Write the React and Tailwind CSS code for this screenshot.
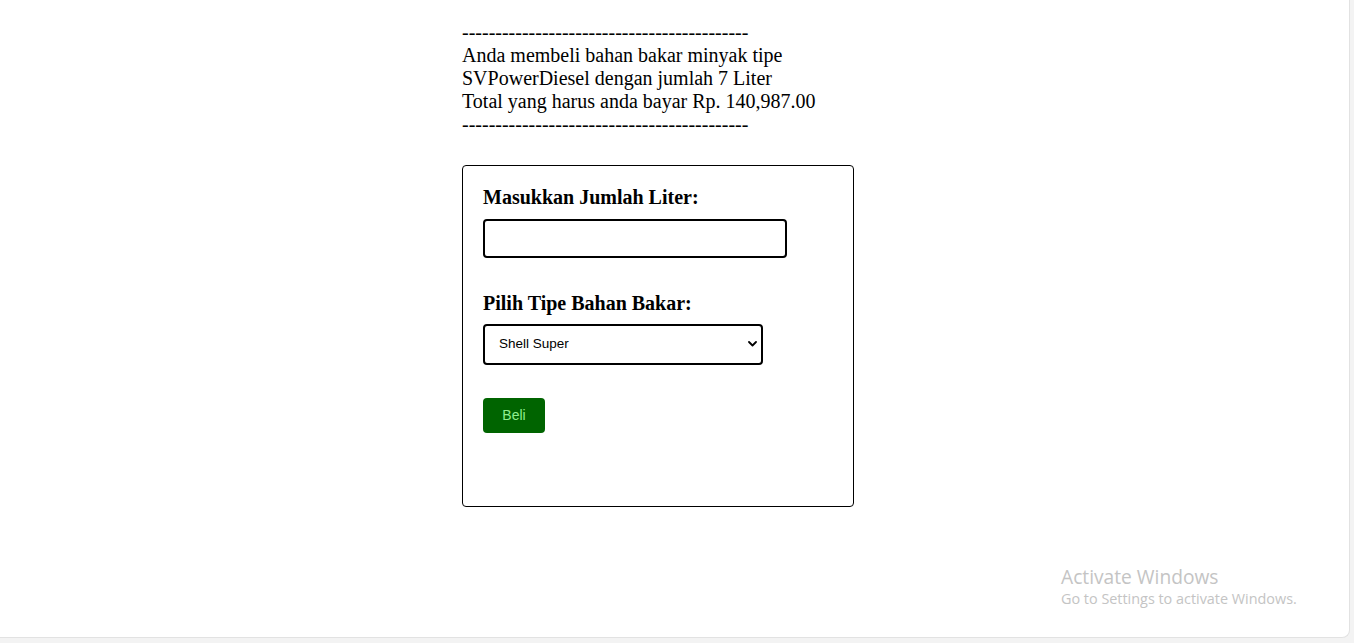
import { useState } from 'react';

const dashes = '-'.repeat(43);

export default function App() {
  const [liter, setLiter] = useState('');
  const [tipe, setTipe] = useState('ShellSuper');

  return (
    <div className="relative h-[643px] w-[1354px] overflow-hidden bg-[#f3f3f3]">
      <div className="h-[638px] w-[1350px] rounded-br-lg border-r border-b border-[#e2e2e2] bg-white">
        <div className="ml-[462px] w-[392px] pt-[21px] font-['Liberation_Serif',serif] text-black">
          <div className="text-[20px] leading-[23px]">
            <div>{dashes}</div>
            <div>Anda membeli bahan bakar minyak tipe</div>
            <div>SVPowerDiesel dengan jumlah 7 Liter</div>
            <div>Total yang harus anda bayar Rp. 140,987.00</div>
            <div>{dashes}</div>
          </div>

          <form
            className="mt-[29px] flex h-[342px] flex-col items-start rounded border border-black px-[20px] pt-[20px]"
            onSubmit={(e) => e.preventDefault()}
          >
            <h3 className="h-[22px] text-[20px] leading-[22px] font-bold">Masukkan Jumlah Liter:</h3>
            <input
              type="number"
              value={liter}
              onChange={(e) => setLiter(e.target.value)}
              className="mt-[11px] h-[39px] w-[304px] rounded border-2 border-black px-2 font-['Liberation_Sans',sans-serif] text-[13px] outline-none"
            />

            <h3 className="mt-[34px] h-[22px] text-[20px] leading-[22px] font-bold">Pilih Tipe Bahan Bakar:</h3>
            <div className="relative mt-[10px]">
              <select
                value={tipe}
                onChange={(e) => setTipe(e.target.value)}
                className="h-[41px] w-[280px] appearance-none rounded border-2 border-black bg-white pl-[14px] font-['Liberation_Sans',sans-serif] text-[13.5px] text-black outline-none"
              >
                <option value="ShellSuper">Shell Super</option>
                <option value="ShellVPower">Shell V-Power</option>
                <option value="ShellVPowerDiesel">Shell V-Power Diesel</option>
                <option value="ShellVPowerNitro">Shell V-Power Nitro</option>
              </select>
              <svg
                className="pointer-events-none absolute top-[17px] right-[6px]"
                width="9"
                height="6"
                viewBox="0 0 9 6"
                fill="none"
                stroke="black"
                strokeWidth="1.8"
                strokeLinecap="round"
                strokeLinejoin="round"
              >
                <path d="M1 1l3.5 3.5L8 1" />
              </svg>
            </div>

            <button
              type="submit"
              className="mt-[33px] h-[35px] w-[62px] rounded bg-[#006400] font-['Liberation_Sans',sans-serif] text-[14px] text-[#90ee90]"
            >
              Beli
            </button>
          </form>
        </div>
      </div>

      {/* windows watermark */}
      <div className="pointer-events-none absolute top-[564px] left-[1061px] font-['Open_Sans',sans-serif] text-[#c4c4c4]">
        <div className="text-[19.2px] leading-[25px]">Activate Windows</div>
        <div className="text-[14.4px] leading-[20px]">Go to Settings to activate Windows.</div>
      </div>
    </div>
  );
}
